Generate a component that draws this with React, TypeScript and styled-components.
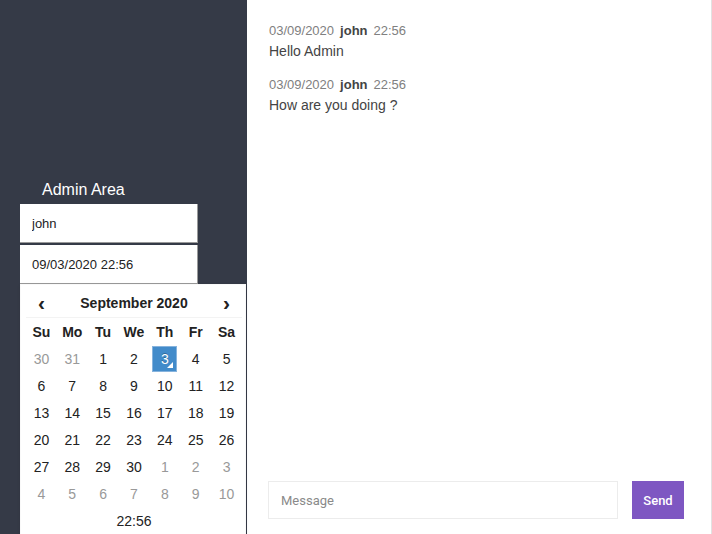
import React from "react";
import styled, { createGlobalStyle } from "styled-components";

const GlobalStyle = createGlobalStyle`
  html, body { margin: 0; padding: 0; }
  body { font-family: Arial, "Liberation Sans", sans-serif; background: #fff; }
  * { box-sizing: border-box; }
`;

const Page = styled.div`
  display: flex;
  width: 712px;
  height: 534px;
  overflow: hidden;
`;

const Sidebar = styled.aside`
  width: 247px;
  flex-shrink: 0;
  background: #353a47;
  padding: 180px 0 0 20px;
`;

const SideTitle = styled.div`
  color: #fff;
  font-size: 16px;
  line-height: 19px;
  padding-left: 22px;
  margin-bottom: 5px;
`;

const FieldStack = styled.div`
  width: 178px;
  display: flex;
  flex-direction: column;
  gap: 2px;
`;

const FieldWrap = styled.div`
  position: relative;
`;

const Field = styled.input`
  display: block;
  width: 100%;
  height: 39px;
  border: none;
  border-right: 1px solid #9a9a9a;
  border-bottom: 1px solid #9a9a9a;
  padding: 0 12px;
  font: 13px Arial, "Liberation Sans", sans-serif;
  color: #222;
  background: #fff;
  outline: none;
`;

const Picker = styled.div`
  position: absolute;
  top: 100%;
  left: 0;
  width: 226px;
  padding: 4px 3px 4px 5px;
  background: #fff;
  border: 1px solid #f9f9f9;
  box-shadow: 0 1px 3px rgba(0, 0, 0, 0.1);
  color: #222;
  font-size: 14px;
`;

const PickerHead = styled.div`
  display: grid;
  grid-template-columns: 1fr 5fr 1fr;
  height: 29px;
  align-items: center;
  text-align: center;
  font-weight: bold;
  border-bottom: 1px solid #f3f3f3;
`;

const Arrow = styled.span`
  font-size: 21px;
  line-height: 28px;
`;

const Grid = styled.div`
  display: grid;
  grid-template-columns: repeat(7, 1fr);
  grid-auto-rows: 27px;
`;

const DowRow = styled(Grid)`
  grid-auto-rows: 28px;
`;

const Dow = styled.div`
  display: flex;
  align-items: center;
  justify-content: center;
  font-weight: bold;
`;

const Day = styled.div<{ $muted?: boolean; $active?: boolean }>`
  position: relative;
  justify-self: center;
  width: 25px;
  height: 26px;
  display: flex;
  align-items: center;
  justify-content: center;
  color: ${(p) => (p.$active ? "#fff" : p.$muted ? "#999" : "#222")};
  background: ${(p) => (p.$active ? "#428bca" : "transparent")};
  border: 1px solid ${(p) => (p.$active ? "#86b3dd" : "transparent")};
  text-shadow: ${(p) => (p.$active ? "0 -1px 0 rgba(0,0,0,0.25)" : "none")};

  &::after {
    content: "";
    display: ${(p) => (p.$active ? "block" : "none")};
    position: absolute;
    right: 3px;
    bottom: 3px;
    border-left: 6px solid transparent;
    border-bottom: 6px solid #fff;
  }
`;

const TimeRow = styled.div`
  height: 26px;
  display: flex;
  align-items: center;
  justify-content: center;
`;

const Main = styled.main`
  flex: 1;
  display: flex;
  flex-direction: column;
  border-right: 1px solid #e2e2e2;
  background: #fff;
`;

const Messages = styled.div`
  flex: 1;
  padding: 21px 22px 0;
`;

const Message = styled.div`
  margin-bottom: 14px;
`;

const Meta = styled.div`
  font-size: 13px;
  line-height: 20px;
  color: #808080;
`;

const Author = styled.span`
  font-weight: bold;
  color: #444;
  margin: 0 6px;
`;

const Text = styled.div`
  font-size: 14px;
  line-height: 20px;
  color: #444;
`;

const Composer = styled.div`
  display: flex;
  gap: 14px;
  padding: 0 27px 15px 21px;
`;

const MessageInput = styled.input`
  flex: 1;
  height: 38px;
  border: 1px solid #ececec;
  padding: 0 12px;
  font: 13px Roboto, Arial, sans-serif;
  color: #333;
  outline: none;
  &::placeholder { color: #8a8a8a; }
`;

const SendButton = styled.button`
  width: 52px;
  height: 38px;
  border: none;
  background: #7e57c2;
  color: #fff;
  font: 500 13px Roboto, Arial, sans-serif;
  padding: 0;
`;

const dows = ["Su", "Mo", "Tu", "We", "Th", "Fr", "Sa"];

type Cell = { n: number; muted?: boolean; active?: boolean };
const cells: Cell[] = [
  { n: 30, muted: true },
  { n: 31, muted: true },
  ...Array.from({ length: 30 }, (_, i) => ({ n: i + 1, active: i + 1 === 3 })),
  ...Array.from({ length: 10 }, (_, i) => ({ n: i + 1, muted: true })),
];

const messages = [
  { date: "03/09/2020", user: "john", time: "22:56", text: "Hello Admin" },
  { date: "03/09/2020", user: "john", time: "22:56", text: "How are you doing ?" },
];

export default function App() {
  return (
    <>
      <GlobalStyle />
      <Page>
        <Sidebar>
          <SideTitle>Admin Area</SideTitle>
          <FieldStack>
            <Field defaultValue="john" />
            <FieldWrap>
              <Field defaultValue="09/03/2020 22:56" />
              <Picker>
                <PickerHead>
                  <Arrow>‹</Arrow>
                  <span>September 2020</span>
                  <Arrow>›</Arrow>
                </PickerHead>
                <DowRow>
                  {dows.map((d) => (
                    <Dow key={d}>{d}</Dow>
                  ))}
                </DowRow>
                <Grid>
                  {cells.map((c, i) => (
                    <Day key={i} $muted={c.muted} $active={c.active}>
                      {c.n}
                    </Day>
                  ))}
                </Grid>
                <TimeRow>22:56</TimeRow>
              </Picker>
            </FieldWrap>
          </FieldStack>
        </Sidebar>
        <Main>
          <Messages>
            {messages.map((m, i) => (
              <Message key={i}>
                <Meta>
                  <span>{m.date}</span>
                  <Author>{m.user}</Author>
                  <span>{m.time}</span>
                </Meta>
                <Text>{m.text}</Text>
              </Message>
            ))}
          </Messages>
          <Composer>
            <MessageInput placeholder="Message" />
            <SendButton>Send</SendButton>
          </Composer>
        </Main>
      </Page>
    </>
  );
}
